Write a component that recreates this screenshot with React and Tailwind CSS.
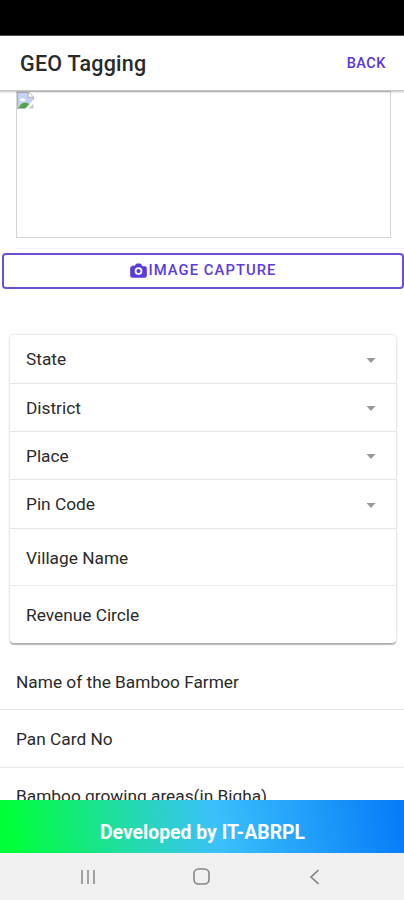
import React from 'react';

const selects = [
  { label: 'State', height: 'h-[49px]' },
  { label: 'District', height: 'h-[48px]' },
  { label: 'Place', height: 'h-[48px]' },
  { label: 'Pin Code', height: 'h-[49px]' },
];

function BrokenImage() {
  return (
    <svg width="17" height="17" viewBox="0 0 16 16">
      <path d="M.5.5h10.500L15.500 5v3L9 15.500H.5z" fill="#c3d3f4" stroke="#b4b4b4" />
      <path d="M3 7.500c0-2 2.500-2.500 3-1 2-.5 2.500 1.500 1.500 2H3z" fill="#fff" />
      <path d="M1.500 15c1-3.500 3.500-5 6-5 2 0 3.500.5 4.500 1.500L9 15z" fill="#52a447" />
      <path d="M10.500.5V5h5" fill="#fff" stroke="#b4b4b4" />
      <path d="M16 6.500L7.500 16h3L16 10z" fill="#fff" />
      <path d="M11 15.500h4.500V11z" fill="#c8c8c8" />
    </svg>
  );
}

function CameraIcon() {
  return (
    <svg width="19" height="19" viewBox="0 0 512 512" fill="currentColor">
      <circle cx="256" cy="272" r="56" />
      <path
        fillRule="evenodd"
        d="M432 144h-59c-3 0-6.700-1.940-9-4l-34-55c-9-15-18-21-34-21h-80c-16 0-26 6-35 21l-33 55c-2 3-5 4-8 4v-8a16 16 0 0 0-16-16h-24a16 16 0 0 0-16 16v8h-4a48 48 0 0 0-48 48v208a48 48 0 0 0 48 48h352a48 48 0 0 0 48-48V192a48 48 0 0 0-48-48zM256 376a104 104 0 1 1 0-208 104 104 0 0 1 0 208z"
      />
    </svg>
  );
}

export default function App() {
  return (
    <div className="flex h-[900px] w-[404px] flex-col overflow-hidden bg-white font-[Roboto,sans-serif] text-[#2a2a2a]">
      <div className="h-[35px] shrink-0 border-b border-[#555] bg-black box-content" />

      <header className="z-10 flex h-[54px] shrink-0 items-center justify-between bg-white pr-[18px] pl-5 shadow-[0_1px_2px_1px_rgba(0,0,0,0.24)]">
        <h1 className="pt-[2px] text-[21.5px] font-medium tracking-[0.25px]">GEO Tagging</h1>
        <button className="pt-[2px] text-[14.5px] font-medium tracking-[0.5px] text-[#5a35dc]">BACK</button>
      </header>

      <main className="min-h-0 flex-1 overflow-hidden">
        <div className="ml-4 border-b border-[#f0f0f0] pt-px pb-[10px]">
          <div className="h-[147px] w-[375px] border border-[#d4d4d4]">
            <BrokenImage />
          </div>
        </div>

        <button className="mt-[4px] ml-[2px] flex h-[36px] w-[402px] items-center justify-center rounded-[4px] border-2 border-[#6b4fd8] pb-[2px] text-[14.8px] font-medium tracking-[1.05px] text-[#5b3ae0]">
          <CameraIcon />
          <span>IMAGE CAPTURE</span>
        </button>

        <div className="mr-2 ml-[10px] mt-[46px] rounded-[4px] bg-white text-[17.3px] shadow-[0_2px_1px_0_rgba(0,0,0,0.26),0_0_3px_0_rgba(0,0,0,0.2)]">
          {selects.map((item) => (
            <div
              key={item.label}
              className={`flex items-center justify-between border-b border-[#e6e6e6] pt-[2px] pr-5 pl-4 ${item.height}`}
            >
              <span>{item.label}</span>
              <svg width="10" height="5" viewBox="0 0 10 5" fill="#999">
                <path d="M.5 0h9L5 5z" />
              </svg>
            </div>
          ))}
          <div className="flex h-[57px] items-center border-b border-[#eaeaea] pt-[3px] pl-4">Village Name</div>
          <div className="flex h-[57px] items-center pt-[3px] pl-4">Revenue Circle</div>
        </div>

        <div className="mt-[10px] text-[17.3px]">
          <div className="flex h-[57px] items-center border-b border-[#e4e4e4] pt-[3px] pl-4">Name of the Bamboo Farmer</div>
          <div className="flex h-[58px] items-center border-b border-[#e8e8e8] pt-[3px] pl-4">Pan Card No</div>
          <div className="flex h-[58px] items-center pl-4">Bamboo growing areas(in Bigha)</div>
        </div>
      </main>

      <footer className="flex h-[53px] shrink-0 items-center justify-center bg-[linear-gradient(80deg,#00ff38_3%,#3bc1fa_53%,#087df8_98%)] pt-[12px] pl-px text-[19.4px] font-bold text-white">
        Developed by IT-ABRPL
      </footer>

      <nav className="flex h-[47px] shrink-0 items-center bg-[#f0f0f0] pl-[80px]">
        <svg width="16" height="16" viewBox="0 0 16 16" stroke="#858585" strokeWidth="1.500">
          <path d="M2 1v14M8 1v14M14 1v14" />
        </svg>
        <svg className="ml-[97px]" width="17" height="17" viewBox="0 0 17 17" fill="none" stroke="#858585" strokeWidth="1.600">
          <rect x="1" y="1" width="15" height="15" rx="4.500" />
        </svg>
        <svg className="ml-[99px]" width="11" height="16" viewBox="0 0 11 16" fill="none" stroke="#858585" strokeWidth="1.600">
          <path d="M9.500 1.200L2 8l7.500 6.800" />
        </svg>
      </nav>
    </div>
  );
}
